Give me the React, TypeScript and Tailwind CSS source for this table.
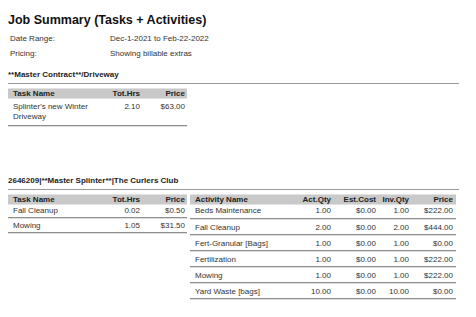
const taskCols = "grid grid-cols-[92px_40px_47px]";
const actCols = "grid grid-cols-[100px_41px_45px_33px_47px]";

const row = "border-b border-[#8f8f8f] shadow-[0_1px_0_#dcdcdc]";
const head = "bg-[#c9c9c9] border-t border-[#e2e2e2] border-b border-[#a5a5a5] font-bold text-[#222] h-[11px] leading-[10px]";

type Task = { name: string; hrs: string; price: string };
type Activity = { name: string; act: string; est: string; inv: string; price: string };

const tasks: Task[] = [
  { name: "Fall Cleanup", hrs: "0.02", price: "$0.50" },
  { name: "Mowing", hrs: "1.05", price: "$31.50" },
];

const activities: Activity[] = [
  { name: "Beds Maintenance", act: "1.00", est: "$0.00", inv: "1.00", price: "$222.00" },
  { name: "Fall Cleanup", act: "2.00", est: "$0.00", inv: "2.00", price: "$444.00" },
  { name: "Fert-Granular [Bags]", act: "1.00", est: "$0.00", inv: "1.00", price: "$0.00" },
  { name: "Fertilization", act: "1.00", est: "$0.00", inv: "1.00", price: "$222.00" },
  { name: "Mowing", act: "1.00", est: "$0.00", inv: "1.00", price: "$222.00" },
  { name: "Yard Waste [bags]", act: "10.00", est: "$0.00", inv: "10.00", price: "$0.00" },
];

function TaskHeader() {
  return (
    <div className={`${taskCols} ${head}`}>
      <div className="pl-[5px]">Task Name</div>
      <div className="text-right">Tot.Hrs</div>
      <div className="text-right pr-[2px]">Price</div>
    </div>
  );
}

function SectionTitle({ children }: { children: React.ReactNode }) {
  return (
    <div className="w-[451px] border-b border-[#9a9a9a] pb-[3px] text-[8px] font-bold leading-[10px] text-[#222]">
      {children}
    </div>
  );
}

export default function App() {
  return (
    <div className="w-[476px] h-[317px] overflow-hidden bg-white px-2 pt-[10px] font-['Liberation_Sans',Arial,sans-serif] text-[#333]">
      <h1 className="text-[12.5px] font-bold leading-[20px] text-[#111]">
        Job Summary (Tasks + Activities)
      </h1>

      <div className="mt-[1px] grid grid-cols-[100px_1fr] pl-[2px] text-[8px] leading-[15px]">
        <div>Date Range:</div>
        <div>Dec-1-2021 to Feb-22-2022</div>
        <div>Pricing:</div>
        <div>Showing billable extras</div>
      </div>

      <div className="mt-[9px]">
        <SectionTitle>**Master Contract**/Driveway</SectionTitle>
      </div>

      <div className="mt-[4px] w-[179px] text-[8px]">
        <TaskHeader />
        <div className={`${taskCols} ${row} pt-[3px] pb-[3px] leading-[10px]`}>
          <div className="pl-[5px]">Splinter's new Winter Driveway</div>
          <div className="text-right">2.10</div>
          <div className="text-right pr-[2px]">$63.00</div>
        </div>
      </div>

      <div className="mt-[50px]">
        <SectionTitle>2646209|**Master Splinter**|The Curlers Club</SectionTitle>
      </div>

      <div className="mt-[4px] flex gap-[3px] text-[8px]">
        <div className="w-[179px]">
          <TaskHeader />
          {tasks.map((t, i) => (
            <div key={i} className={`${taskCols} ${row} ${i === 0 ? "h-[13px] pt-[1px]" : "h-[15px] pt-[3px]"} leading-[10px]`}>
              <div className="pl-[5px]">{t.name}</div>
              <div className="text-right">{t.hrs}</div>
              <div className="text-right pr-[2px]">{t.price}</div>
            </div>
          ))}
        </div>

        <div className="w-[266px]">
          <div className={`${actCols} ${head}`}>
            <div className="pl-[5px]">Activity Name</div>
            <div className="text-right">Act.Qty</div>
            <div className="text-right">Est.Cost</div>
            <div className="text-right">Inv.Qty</div>
            <div className="text-right pr-[3px]">Price</div>
          </div>
          {activities.map((a, i) => (
            <div key={i} className={`${actCols} ${row} ${i === 0 ? "h-[14px] pt-[1px]" : "h-[16px] pt-[4px]"} leading-[10px]`}>
              <div className="pl-[5px]">{a.name}</div>
              <div className="text-right">{a.act}</div>
              <div className="text-right">{a.est}</div>
              <div className="text-right">{a.inv}</div>
              <div className="text-right pr-[3px]">{a.price}</div>
            </div>
          ))}
        </div>
      </div>
    </div>
  );
}
